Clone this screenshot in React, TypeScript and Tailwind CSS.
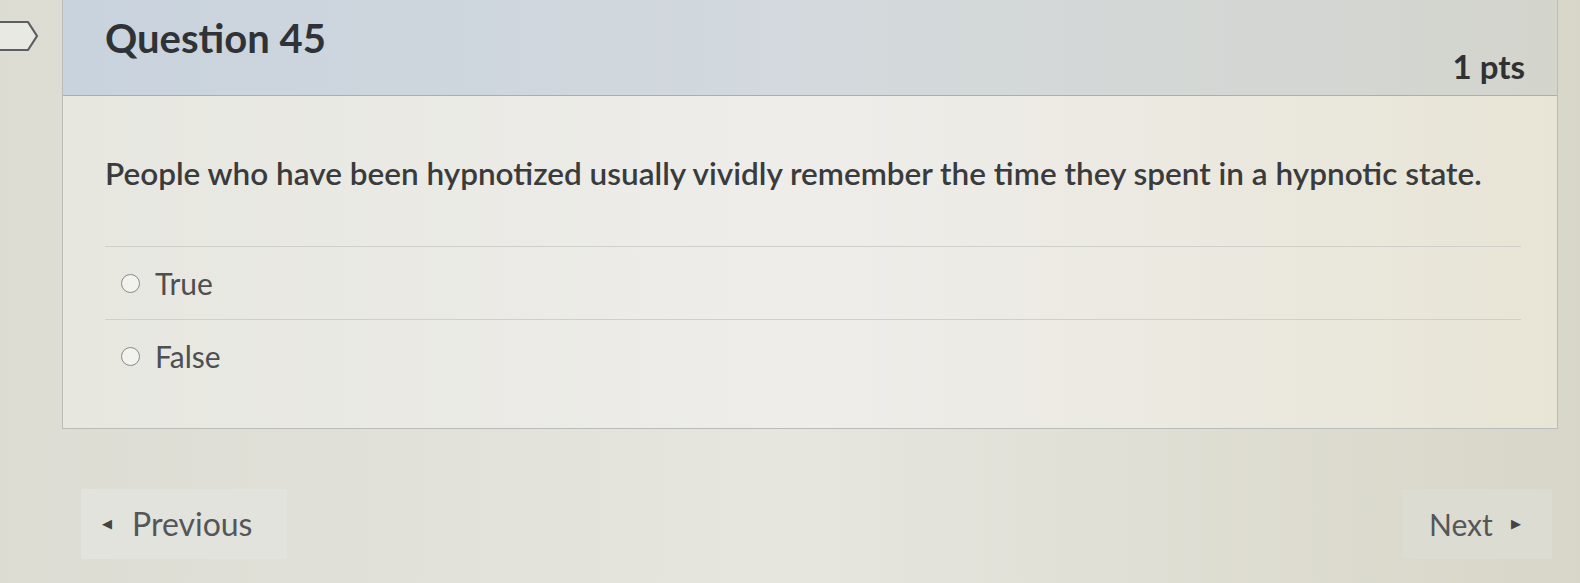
import React from 'react';

const Radio: React.FC<{ label: string }> = ({ label }) => (
  <label className="flex items-center gap-[15px] h-[72px] pl-[16px] text-[30px] text-[#4d4f51]">
    <span className="w-[19px] h-[19px] rounded-full border-[1.5px] border-[#8a8a86] bg-[#f2f2ee]" />
    <span>{label}</span>
  </label>
);

const App: React.FC = () => {
  return (
    <div
      className="w-[1580px] h-[583px] overflow-hidden bg-gradient-to-r from-[#dcdcd3] via-[#e6e6df] to-[#d8d6c8] flex"
      style={{ fontFamily: 'Lato, "Open Sans", sans-serif' }}
    >
      {/* flag marker column */}
      <div className="w-[62px] shrink-0 pt-[20px]">
        <svg width="42" height="32" viewBox="0 0 42 32" className="-ml-[2px]">
          <path d="M0 2 H30 L39 16 L30 30 H0" fill="#e9e9e4" stroke="#5b5f63" strokeWidth="2.2" />
        </svg>
      </div>

      <div className="flex-1 pr-[22px] flex flex-col">
        {/* question card */}
        <div className="border border-[#b9bcb8] border-t-0 h-[429px] flex flex-col">
          <div className="h-[96px] shrink-0 flex justify-between pl-[42px] pr-[32px] pt-[18px] bg-gradient-to-r from-[#c9d3dd] via-[#d3d9dd] to-[#d3d5cd] border-b border-[#a9aeb0]">
            <h2 className="text-[40px] font-bold text-[#2f3337] leading-none">Question 45</h2>
            <span className="text-[33px] font-bold text-[#2f3133] mt-[32px] leading-none">1 pts</span>
          </div>
          <div className="flex-1 bg-gradient-to-r from-[#e7e7e0] via-[#eeedea] to-[#e8e5d6] pl-[42px] pr-[36px]">
            <p className="mt-[58px] text-[31.5px] font-semibold text-[#393b3d] leading-[39px] whitespace-nowrap">
              People who have been hypnotized usually vividly remember the time they spent in a hypnotic state.
            </p>
            <div className="mt-[53px] border-t border-[#d0d0ca]" />
            <Radio label="True" />
            <div className="border-t border-[#d0d0ca]" />
            <Radio label="False" />
          </div>
        </div>

        {/* navigation */}
        <div className="flex justify-between mt-[60px] pl-[19px] pr-[6px]">
          <button className="flex items-center gap-[20px] h-[70px] w-[206px] pl-[21px] bg-[#e3e3dd] text-[32px] text-[#545658]">
            <span className="text-[13px] text-[#444]">◀</span>
            Previous
          </button>
          <button className="flex items-center gap-[18px] h-[70px] w-[150px] pl-[27px] bg-[#dcdcd2] text-[30px] text-[#545658]">
            Next
            <span className="text-[13px] text-[#444]">▶</span>
          </button>
        </div>
      </div>
    </div>
  );
};

export default App;
